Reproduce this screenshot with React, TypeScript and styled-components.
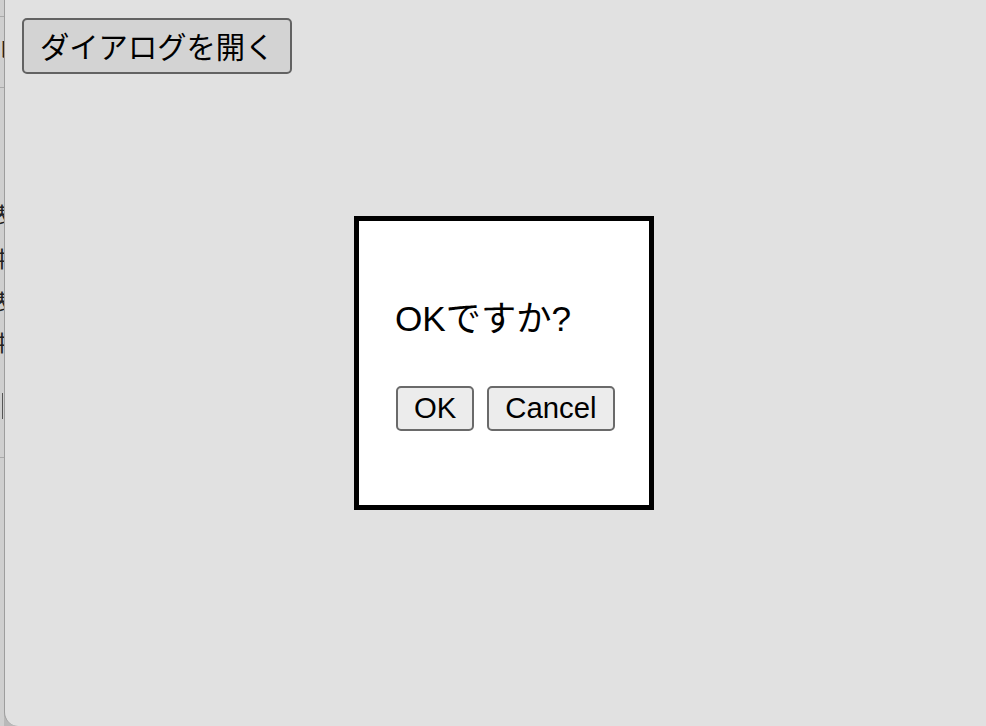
import React from "react";
import styled, { createGlobalStyle } from "styled-components";

const Global = createGlobalStyle`
  html, body {
    margin: 0;
    padding: 0;
    width: 986px;
    height: 726px;
    overflow: hidden;
    background: #b9b9b9;
  }
  * { box-sizing: border-box; }
`;

const Screen = styled.div`
  display: flex;
  width: 986px;
  height: 726px;
  font-family: "Liberation Sans", "Noto Sans CJK JP", sans-serif;
  color: #000;
`;

const BehindWindow = styled.div`
  width: 4px;
  height: 100%;
  overflow: hidden;
  background: #cfcfcf;
  display: flex;
  flex-direction: column;
  align-items: flex-end;
`;

const BehindRule = styled.div<{ $top: number }>`
  flex: none;
  width: 40px;
  height: 1px;
  margin-top: ${(p) => p.$top}px;
  background: #a9a9a9;
`;

const BehindText = styled.div<{ $top: number }>`
  flex: none;
  margin-top: ${(p) => p.$top}px;
  white-space: nowrap;
  font-family: "Noto Sans CJK JP", sans-serif;
  font-size: 22px;
  line-height: 24px;
  color: #222;
  margin-right: -9px;
`;

const BehindBar = styled.div<{ $top: number }>`
  flex: none;
  margin-top: ${(p) => p.$top}px;
  width: 1px;
  height: 26px;
  margin-right: 1px;
  background: #555;
`;

const MainWindow = styled.div`
  position: relative;
  flex: 1;
  height: 100%;
  background: #e1e1e1;
  border-left: 1px solid #9d9d9d;
  border-bottom-left-radius: 14px;
  padding: 18px 0 0 17px;
`;

const OpenButton = styled.button`
  height: 56px;
  padding: 0 16px;
  border: 2px solid #626262;
  border-radius: 5px;
  background: #d3d3d3;
  font-family: "Noto Sans CJK JP", "Liberation Sans", sans-serif;
  font-size: 29.3px;
  line-height: 1;
  color: #000;
`;

const Backdrop = styled.div`
  position: absolute;
  inset: 0;
  display: flex;
  align-items: center;
  justify-content: center;
  padding-left: 17px;
  padding-bottom: 1px;
`;

const Dialog = styled.div`
  width: 300px;
  height: 294px;
  border: 5px solid #000;
  background: #fff;
  padding: 78px 35px 0 36px;
  display: flex;
  flex-direction: column;
`;

const Message = styled.p`
  margin: 0;
  font-size: 35.2px;
  line-height: 40px;
  white-space: nowrap;
`;

const Actions = styled.div`
  display: flex;
  gap: 13px;
  margin-top: 47px;
  padding-left: 1px;
`;

const DialogButton = styled.button`
  height: 45px;
  padding: 0 16px;
  border: 2px solid #6a6a6a;
  border-radius: 5px;
  background: #ececec;
  font-family: "Liberation Sans", "Noto Sans CJK JP", sans-serif;
  font-size: 29.3px;
  line-height: 1;
  color: #000;
`;

export default function App() {
  return (
    <>
      <Global />
      <Screen>
        <BehindWindow>
          <BehindRule $top={16} />
          <BehindText $top={18}>ル</BehindText>
          <BehindRule $top={28} />
          <BehindText $top={113}>表</BehindText>
          <BehindText $top={20}>中</BehindText>
          <BehindText $top={19}>表</BehindText>
          <BehindText $top={17}>中</BehindText>
          <BehindBar $top={40} />
          <BehindRule $top={38} />
        </BehindWindow>
        <MainWindow>
          <OpenButton>ダイアログを開く</OpenButton>
          <Backdrop>
            <Dialog>
              <Message>OKですか?</Message>
              <Actions>
                <DialogButton>OK</DialogButton>
                <DialogButton>Cancel</DialogButton>
              </Actions>
            </Dialog>
          </Backdrop>
        </MainWindow>
      </Screen>
    </>
  );
}
